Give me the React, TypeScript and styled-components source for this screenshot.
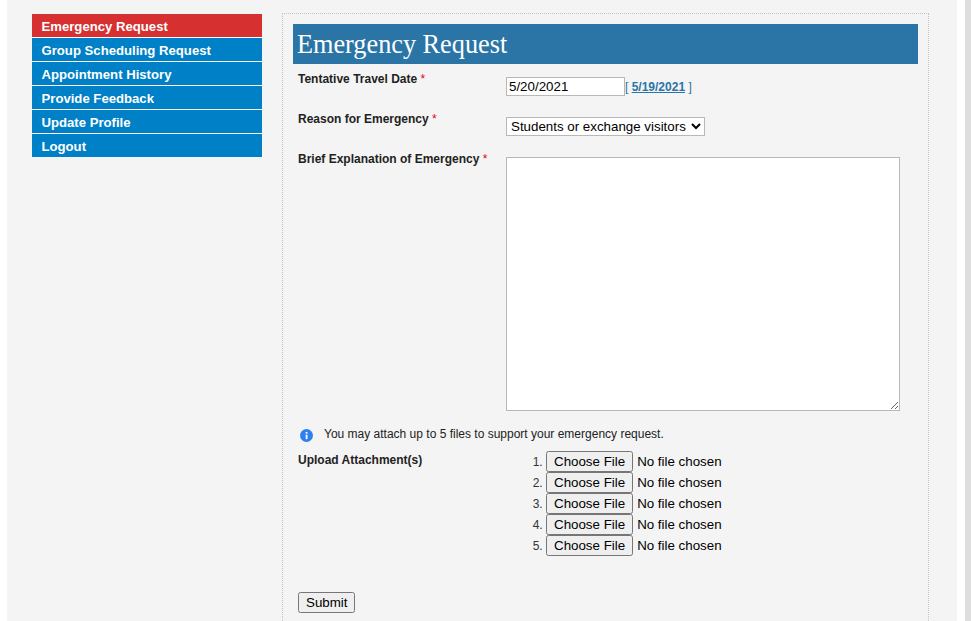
import styled, { createGlobalStyle } from 'styled-components';

const GlobalStyle = createGlobalStyle`
  html, body {
    margin: 0;
    height: 621px;
    overflow: hidden;
    background: #fff;
    font-family: 'Liberation Sans', Arial, sans-serif;
  }
`;

const Page = styled.div`
  display: flex;
  height: 621px;
  padding-left: 7px;
`;

const Wrapper = styled.div`
  display: flex;
  align-items: flex-start;
  width: 950px;
  height: 100%;
  overflow: hidden;
  background: #f4f4f4;
  padding: 13px 0 0 25px;
  box-sizing: border-box;
`;

const Gutter = styled.div`
  width: 6px;
  margin-left: 8px;
  background: #dedede;
`;

const Sidebar = styled.ul`
  list-style: none;
  width: 230px;
  margin: 1px 20px 0 0;
  padding: 0;
  flex-shrink: 0;
`;

const NavItem = styled.li<{ $active?: boolean }>`
  height: 23px;
  line-height: 25px;
  padding-left: 9.5px;
  background: ${p => (p.$active ? '#d63031' : '#0080c6')};
  border-bottom: 1px solid #fff;
  color: #fff;
  font-size: 13.15px;
  font-weight: 700;

  &:last-child {
    border-bottom: 0;
  }
`;

const Main = styled.main`
  width: 647px;
  height: 640px;
  box-sizing: border-box;
  border: 1px dotted #c4c4c4;
  padding: 10px 10px 0 10px;
  flex-shrink: 0;
`;

const Title = styled.h1`
  margin: 0;
  height: 40px;
  line-height: 41px;
  padding-left: 4px;
  background: #2a75a6;
  color: #fff;
  font-family: 'Liberation Serif', Georgia, serif;
  font-size: 26.25px;
  font-weight: 400;
`;

const Row = styled.div<{ $height: number }>`
  display: grid;
  grid-template-columns: 208px 1fr;
  height: ${p => p.$height}px;
  padding-left: 5px;
`;

const Label = styled.label`
  color: #222;
  font-size: 12px;
  font-weight: 700;
  line-height: 14px;
  padding-top: 8px;
`;

const Required = styled.span`
  color: #e4002b;
  font-weight: 400;
`;

const Field = styled.div`
  padding-top: 13px;
  font-size: 12px;
`;

const DateInput = styled.input`
  width: 119px;
  height: 19px;
  box-sizing: border-box;
  border: 1px solid #b8b8b8;
  padding: 0 2px;
  font: 13.33px 'Liberation Sans', Arial, sans-serif;
  color: #000;
  background: #fff;
  outline: none;
`;

const DateHint = styled.span`
  color: #2a75a6;
  font-size: 12px;
`;

const DateLink = styled.a`
  color: #2a75a6;
  font-weight: 700;
  text-decoration: underline;
`;

const Select = styled.select`
  width: 199px;
  height: 19px;
  border: 1px solid #b8b8b8;
  border-radius: 0;
  background: #fff;
  color: #000;
  font: 13.33px 'Liberation Sans', Arial, sans-serif;
  outline: none;
`;

const Explanation = styled.textarea`
  display: block;
  width: 394px;
  height: 254px;
  box-sizing: border-box;
  border: 1px solid #b8b8b8;
  background: #fff;
  outline: none;
`;

const Notice = styled.p`
  display: flex;
  align-items: center;
  gap: 11px;
  margin: 0;
  height: 20px;
  padding: 14px 0 4px 7px;
  color: #222;
  font-size: 12px;
`;

const InfoIcon = styled.svg`
  width: 13px;
  height: 13px;
  margin-top: 2px;
  flex-shrink: 0;
`;

const UploadLabel = styled(Label)`
  padding-top: 5px;
`;

const FileList = styled.ol`
  margin: 0;
  padding: 3px 0 0 40px;
  color: #333;
  font-size: 12px;
`;

const FileRow = styled.li`
  height: 21px;
`;

const FileInput = styled.input`
  display: block;
  width: 190px;
  height: 21px;
  color: #000;
  font: 13.33px 'Liberation Sans', Arial, sans-serif;
  outline: none;
`;

const SubmitRow = styled.div`
  padding: 0 0 0 5px;
`;

const SubmitButton = styled.button`
  display: block;
  height: 21px;
  padding: 0 6px;
  color: #000;
  font: 13.33px 'Liberation Sans', Arial, sans-serif;
`;

const navItems = [
  'Emergency Request',
  'Group Scheduling Request',
  'Appointment History',
  'Provide Feedback',
  'Update Profile',
  'Logout',
];

const App = () => (
  <>
    <GlobalStyle />
    <Page>
      <Wrapper>
        <Sidebar>
          {navItems.map((item, index) => (
            <NavItem key={item} $active={index === 0}>
              {item}
            </NavItem>
          ))}
        </Sidebar>
        <Main>
          <Title>Emergency Request</Title>
          <Row $height={40}>
            <Label>
              Tentative Travel Date <Required>*</Required>
            </Label>
            <Field>
              <DateInput type="text" defaultValue="5/20/2021" />
              <DateHint>
                [ <DateLink href="#">5/19/2021</DateLink> ]
              </DateHint>
            </Field>
          </Row>
          <Row $height={40}>
            <Label>
              Reason for Emergency <Required>*</Required>
            </Label>
            <Field>
              <Select defaultValue="students">
                <option value="students">Students or exchange visitors</option>
              </Select>
            </Field>
          </Row>
          <Row $height={266}>
            <Label>
              Brief Explanation of Emergency <Required>*</Required>
            </Label>
            <Field>
              <Explanation />
            </Field>
          </Row>
          <Notice>
            <InfoIcon viewBox="0 0 16 16">
              <circle cx="8" cy="8" r="8" fill="#2f80ed" />
              <rect x="7" y="7" width="2.2" height="5.5" fill="#fff" />
              <rect x="7" y="3.6" width="2.2" height="2.2" fill="#fff" />
            </InfoIcon>
            You may attach up to 5 files to support your emergency request.
          </Notice>
          <Row $height={144}>
            <UploadLabel>Upload Attachment(s)</UploadLabel>
            <FileList>
              {[1, 2, 3, 4, 5].map(n => (
                <FileRow key={n}>
                  <FileInput type="file" />
                </FileRow>
              ))}
            </FileList>
          </Row>
          <SubmitRow>
            <SubmitButton type="button">Submit</SubmitButton>
          </SubmitRow>
        </Main>
      </Wrapper>
      <Gutter />
    </Page>
  </>
);

export default App;
